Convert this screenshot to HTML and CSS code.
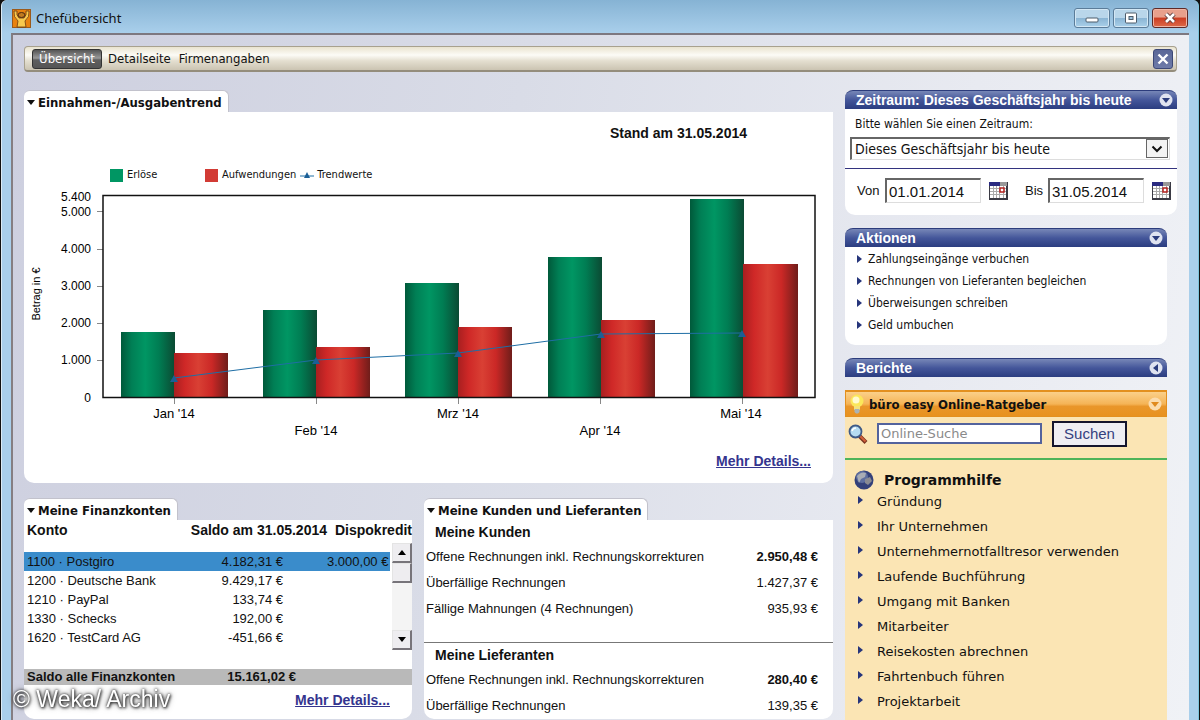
FILE: index.html
```html
<!DOCTYPE html>
<html lang="de">
<head>
    <meta charset="UTF-8">
    <meta name="viewport" content="width=device-width, initial-scale=1.0">
    <title>Chefübersicht</title>
    <link rel="stylesheet" href="styles.css">
</head>
<body>
    <div class="window">
        <header class="titlebar">
            <svg class="app-icon" width="19" height="19" viewBox="0 0 19 19">
                <rect x="0.5" y="0.5" width="18" height="18" fill="#e8820f" stroke="#9a5a1c"/>
                <path d="M2 2 L5 2 Q4 6 7 9 L12 9 Q15 6 14 2 L17 2 Q18 8 13 12 L14 18 L5 18 L6 12 Q1 8 2 2Z" fill="#f7c94e" stroke="#6b3a12" stroke-width="0.8"/>
                <ellipse cx="9.500" cy="6" rx="3.500" ry="2.500" fill="#c07a20" stroke="#4a2a12"/>
            </svg>
            <h1>Chefübersicht</h1>
            <div class="window-buttons">
                <button class="win-btn" aria-label="Minimieren">
                    <svg width="14" height="12" viewBox="0 0 14 12"><rect x="1" y="6" width="12" height="4" rx="1" fill="#fff" stroke="#4d5c6b"/></svg>
                </button>
                <button class="win-btn" aria-label="Maximieren">
                    <svg width="14" height="12" viewBox="0 0 14 12"><rect x="1.500" y="1" width="11" height="10" rx="1" fill="#fff" stroke="#4d5c6b"/><rect x="5" y="4.500" width="4" height="3" fill="#9cc4e0" stroke="#4d5c6b"/></svg>
                </button>
                <button class="win-btn win-close" aria-label="Schließen">
                    <svg width="14" height="12" viewBox="0 0 14 12"><path d="M3 2 L11 10 M11 2 L3 10" stroke="#5c3a3a" stroke-width="4.500"/><path d="M3 2 L11 10 M11 2 L3 10" stroke="#fff" stroke-width="2.600"/></svg>
                </button>
            </div>
        </header>

        <div class="client">
            <nav class="toolbar">
                <button class="tab-btn active">Übersicht</button>
                <button class="tab-btn">Detailseite</button>
                <button class="tab-btn">Firmenangaben</button>
                <button class="close-view" aria-label="Ansicht schließen">
                    <svg width="12" height="12" viewBox="0 0 12 12"><path d="M1.500 1.500 L10.500 10.500 M10.500 1.500 L1.500 10.500" stroke="#fff" stroke-width="2.400"/></svg>
                </button>
            </nav>

            <div class="columns">
                <main>
                    <section class="panel">
                        <h2 class="panel-tab">Einnahmen-/Ausgabentrend</h2>
                        <div class="panel-body trend">
                            <p class="stand">Stand am 31.05.2014</p>
                            <ul class="legend">
                                <li><span class="swatch green"></span>Erlöse</li>
                                <li><span class="swatch red"></span>Aufwendungen</li>
                                <li class="trend-key"><svg width="14" height="9" viewBox="0 0 14 9"><path d="M0 5 H14" stroke="#1f6ea5"/><path d="M7 1 L10 7 H4Z" fill="#1b5f96"/></svg>Trendwerte</li>
                            </ul>
                            <svg class="chart" viewBox="0 0 809 252" role="img" aria-label="Erlöse und Aufwendungen">
                                <defs>
                                    <linearGradient id="green">
                                        <stop offset="0" stop-color="#00593a"/>
                                        <stop offset="0.200" stop-color="#007f55"/>
                                        <stop offset="0.450" stop-color="#009663"/>
                                        <stop offset="0.700" stop-color="#007d53"/>
                                        <stop offset="1" stop-color="#0b4a33"/>
                                    </linearGradient>
                                    <linearGradient id="red">
                                        <stop offset="0" stop-color="#a81f20"/>
                                        <stop offset="0.200" stop-color="#cf2827"/>
                                        <stop offset="0.450" stop-color="#d94034"/>
                                        <stop offset="0.700" stop-color="#cb2826"/>
                                        <stop offset="1" stop-color="#6f1d1a"/>
                                    </linearGradient>
                                </defs>
                                <g stroke="#888">
                                    <path d="M73 23.500 H79 M73 61.500 H79 M73 98.500 H79 M73 135.500 H79 M73 172.500 H79"/>
                                    <path d="M150.500 210 V216 M292.500 210 V216 M434.500 210 V216 M576.500 210 V216 M718.500 210 V216"/>
                                </g>
                                <g fill="url(#green)">
                                    <rect x="97" y="144" width="54" height="66"/>
                                    <rect x="239" y="122" width="54" height="88"/>
                                    <rect x="381" y="95" width="54" height="115"/>
                                    <rect x="524" y="69" width="54" height="141"/>
                                    <rect x="666" y="11" width="54" height="199"/>
                                </g>
                                <g fill="url(#red)">
                                    <rect x="150" y="165" width="54" height="45"/>
                                    <rect x="292" y="159" width="54" height="51"/>
                                    <rect x="434" y="139" width="54" height="71"/>
                                    <rect x="577" y="132" width="54" height="78"/>
                                    <rect x="719" y="76" width="55" height="134"/>
                                </g>
                                <rect x="79" y="7.500" width="712" height="202" fill="none" stroke="#111" stroke-width="1.500"/>
                                <polyline points="150,190 292,172 434,165 577,146 718,145" fill="none" stroke="#1f6ea5"/>
                                <g fill="#1b5f96">
                                    <path d="M150 187 l4 7 h-8z"/>
                                    <path d="M292 169 l4 7 h-8z"/>
                                    <path d="M434 162 l4 7 h-8z"/>
                                    <path d="M577 143 l4 7 h-8z"/>
                                    <path d="M718 142 l4 7 h-8z"/>
                                </g>
                                <g class="y-labels">
                                    <text x="67" y="13">5.400</text>
                                    <text x="67" y="28">5.000</text>
                                    <text x="67" y="65">4.000</text>
                                    <text x="67" y="102">3.000</text>
                                    <text x="67" y="139">2.000</text>
                                    <text x="67" y="176">1.000</text>
                                    <text x="67" y="214">0</text>
                                </g>
                                <text class="axis-title" transform="translate(16 106) rotate(-90)">Betrag in €</text>
                                <g class="x-labels">
                                    <text x="150" y="230">Jan '14</text>
                                    <text x="292" y="247">Feb '14</text>
                                    <text x="434" y="230">Mrz '14</text>
                                    <text x="576" y="247">Apr '14</text>
                                    <text x="717" y="230">Mai '14</text>
                                </g>
                            </svg>
                            <a class="more" href="#">Mehr Details...</a>
                        </div>
                    </section>

                    <div class="lower">
                        <section class="panel accounts-panel">
                            <h2 class="panel-tab">Meine Finanzkonten</h2>
                            <div class="panel-body">
                                <table class="accounts">
                                    <colgroup><col class="c-name"><col class="c-saldo"><col><col class="c-scroll"></colgroup>
                                    <thead>
                                        <tr><th>Konto</th><th>Saldo am 31.05.2014</th><th colspan="2">Dispokredit</th></tr>
                                    </thead>
                                    <tbody>
                                        <tr class="selected"><td>1100 · Postgiro</td><td>4.182,31 €</td><td>3.000,00 €</td></tr>
                                        <tr><td>1200 · Deutsche Bank</td><td>9.429,17 €</td><td></td></tr>
                                        <tr><td>1210 · PayPal</td><td>133,74 €</td><td></td></tr>
                                        <tr><td>1330 · Schecks</td><td>192,00 €</td><td></td></tr>
                                        <tr><td>1620 · TestCard AG</td><td>-451,66 €</td><td></td></tr>
                                    </tbody>
                                    <tfoot>
                                        <tr><td>Saldo alle Finanzkonten</td><td>15.161,02 €</td><td colspan="2"></td></tr>
                                    </tfoot>
                                </table>
                                <div class="scrollbar">
                                    <button aria-label="Nach oben"><svg width="8" height="5" viewBox="0 0 8 5"><path d="M4 0 L8 5 H0Z"/></svg></button>
                                    <span class="thumb"></span>
                                    <button class="down" aria-label="Nach unten"><svg width="8" height="5" viewBox="0 0 8 5"><path d="M0 0 H8 L4 5Z"/></svg></button>
                                </div>
                                <a class="more" href="#">Mehr Details...</a>
                            </div>
                        </section>

                        <section class="panel partners-panel">
                            <h2 class="panel-tab">Meine Kunden und Lieferanten</h2>
                            <div class="panel-body">
                                <h3>Meine Kunden</h3>
                                <table class="partners">
                                    <tr><td>Offene Rechnungen inkl. Rechnungskorrekturen</td><td class="strong">2.950,48 €</td></tr>
                                    <tr><td>Überfällige Rechnungen</td><td>1.427,37 €</td></tr>
                                    <tr><td>Fällige Mahnungen (4 Rechnungen)</td><td>935,93 €</td></tr>
                                </table>
                                <hr>
                                <h3>Meine Lieferanten</h3>
                                <table class="partners">
                                    <tr><td>Offene Rechnungen inkl. Rechnungskorrekturen</td><td class="strong">280,40 €</td></tr>
                                    <tr><td>Überfällige Rechnungen</td><td>139,35 €</td></tr>
                                </table>
                            </div>
                        </section>
                    </div>
                </main>

                <aside>
                    <section class="card period">
                        <h2 class="card-head">Zeitraum: Dieses Geschäftsjahr bis heute
                            <svg width="14" height="14" viewBox="0 0 14 14"><circle cx="7" cy="7" r="6.500" fill="#dfe3f0"/><path d="M3 5 H11 L7 10Z" fill="#2b3c7c"/></svg>
                        </h2>
                        <div class="card-body">
                            <label class="period-label" for="zeitraum">Bitte wählen Sie einen Zeitraum:</label>
                            <div class="select-box">
                                <select id="zeitraum"><option>Dieses Geschäftsjahr bis heute</option></select>
                                <span class="select-arrow"><svg width="12" height="8" viewBox="0 0 12 8"><path d="M1.500 1.500 L6 6 L10.500 1.500" fill="none" stroke="#111" stroke-width="2"/></svg></span>
                            </div>
                            <div class="dates">
                                <label for="von">Von</label>
                                <input id="von" type="text" value="01.01.2014">
                                <button class="cal" aria-label="Kalender"><svg width="19" height="18" viewBox="0 0 19 18"><rect width="19" height="18" fill="#3a3a44"/><rect x="1" y="1" width="16" height="15" fill="#fff"/><path d="M1 6.500 H17 M1 9.500 H17 M1 12.500 H17 M4.500 4 V16 M7.500 4 V16 M10.500 4 V16 M14.500 4 V16" stroke="#aaa"/><rect width="11" height="4" fill="#2a2a80"/><rect x="11" width="7" height="4" fill="#999"/><rect x="11" y="6" width="4" height="4" fill="#fff" stroke="#b3201e" stroke-width="1.500"/></svg></button>
                                <label class="bis" for="bis">Bis</label>
                                <input id="bis" type="text" value="31.05.2014">
                                <button class="cal" aria-label="Kalender"><svg width="19" height="18" viewBox="0 0 19 18"><rect width="19" height="18" fill="#3a3a44"/><rect x="1" y="1" width="16" height="15" fill="#fff"/><path d="M1 6.500 H17 M1 9.500 H17 M1 12.500 H17 M4.500 4 V16 M7.500 4 V16 M10.500 4 V16 M14.500 4 V16" stroke="#aaa"/><rect width="11" height="4" fill="#2a2a80"/><rect x="11" width="7" height="4" fill="#999"/><rect x="11" y="6" width="4" height="4" fill="#fff" stroke="#b3201e" stroke-width="1.500"/></svg></button>
                            </div>
                        </div>
                    </section>

                    <section class="card">
                        <h2 class="card-head">Aktionen
                            <svg width="14" height="14" viewBox="0 0 14 14"><circle cx="7" cy="7" r="6.500" fill="#dfe3f0"/><path d="M3 5 H11 L7 10Z" fill="#2b3c7c"/></svg>
                        </h2>
                        <ul class="card-body actions">
                            <li><a href="#">Zahlungseingänge verbuchen</a></li>
                            <li><a href="#">Rechnungen von Lieferanten begleichen</a></li>
                            <li><a href="#">Überweisungen schreiben</a></li>
                            <li><a href="#">Geld umbuchen</a></li>
                        </ul>
                    </section>

                    <section class="card">
                        <h2 class="card-head">Berichte
                            <svg width="14" height="14" viewBox="0 0 14 14"><circle cx="7" cy="7" r="6.500" fill="#dfe3f0"/><path d="M9 3 V11 L4 7Z" fill="#2b3c7c"/></svg>
                        </h2>
                    </section>

                    <section class="card guide">
                        <h2 class="guide-head">
                            <svg width="14" height="20" viewBox="0 0 14 20"><circle cx="7" cy="7" r="6.500" fill="#fbe75a"/><circle cx="6" cy="6" r="3.500" fill="#fffbd0"/><path d="M4 12 H10 V16 H4Z" fill="#f4e27a"/><path d="M4.500 15 H9.500 V18 L8 19.500 H6 L4.500 18Z" fill="#a9b3b5"/></svg>
                            büro easy Online-Ratgeber
                            <svg class="toggle" width="14" height="14" viewBox="0 0 14 14"><circle cx="7" cy="7" r="6.500" fill="#fbdcae"/><path d="M3 5 H11 L7 10Z" fill="#e08a1e"/></svg>
                        </h2>
                        <form class="search">
                            <svg width="20" height="20" viewBox="0 0 20 20"><path d="M11.500 12 L18 18.500" stroke="#7a3420" stroke-width="4"/><path d="M12 12 L17.500 17.500" stroke="#d2603a" stroke-width="2"/><circle cx="7.500" cy="7.500" r="6" fill="#b5dcf2" stroke="#3f5a86" stroke-width="1.800"/><path d="M4 7 Q5 4 8 4" fill="none" stroke="#fff" stroke-width="1.500"/></svg>
                            <input type="text" placeholder="Online-Suche" aria-label="Online-Suche">
                            <button type="button">Suchen</button>
                        </form>
                        <div class="help">
                            <h3>
                                <svg width="20" height="20" viewBox="0 0 20 20"><circle cx="10" cy="10" r="9.500" fill="#34417a"/><circle cx="8" cy="7" r="6" fill="#5f6f9f"/><path d="M3 6 Q7 1 12 3 L11 7 L7 9 L5 13 Z" fill="#a9adb5"/><path d="M11 9 L16 7 L18 11 L14 15 L11 13Z" fill="#8a8b92"/></svg>
                                Programmhilfe
                            </h3>
                            <ul>
                                <li><a href="#">Gründung</a></li>
                                <li><a href="#">Ihr Unternehmen</a></li>
                                <li><a href="#">Unternehmernotfalltresor verwenden</a></li>
                                <li><a href="#">Laufende Buchführung</a></li>
                                <li><a href="#">Umgang mit Banken</a></li>
                                <li><a href="#">Mitarbeiter</a></li>
                                <li><a href="#">Reisekosten abrechnen</a></li>
                                <li><a href="#">Fahrtenbuch führen</a></li>
                                <li><a href="#">Projektarbeit</a></li>
                            </ul>
                        </div>
                    </section>
                </aside>
            </div>
        </div>
    </div>
    <div class="watermark">© Weka/ Archiv</div>
</body>
</html>
```

FILE: styles.css
```css
* {
    box-sizing: border-box;
}

body {
    margin: 0;
    height: 100vh;
    overflow: hidden;
    font-family: "Liberation Sans", Arial, sans-serif;
    font-size: 13px;
    color: #111;
    background: #111;
}

h1, h2, h3, p, ul {
    margin: 0;
    padding: 0;
}

ul {
    list-style: none;
}

a {
    color: inherit;
    text-decoration: none;
}

button {
    font-family: inherit;
    padding: 0;
    border: none;
    background: none;
}

svg {
    display: block;
    flex: none;
}

/* window frame */
.window {
    display: flex;
    flex-direction: column;
    height: 100vh;
    margin: 0 1px;
    padding: 0 9px;
    background: #a9cfeb;
    border-left: 1px solid #dcebf5;
    border-right: 1px solid #7cc4dc;
    border-radius: 6px 6px 0 0;
}

.titlebar {
    display: flex;
    align-items: center;
    height: 33px;
    margin: 0 -9px;
    padding: 3px 10px 0;
    background: linear-gradient(#86b3d4, #a9cfeb);
    border-radius: 6px 6px 0 0;
}

.titlebar h1 {
    margin-left: 5px;
    font: 13px/20px "Noto Sans", sans-serif;
}

.window-buttons {
    display: flex;
    gap: 3px;
    margin-left: auto;
}

.win-btn {
    display: flex;
    align-items: center;
    justify-content: center;
    width: 36px;
    height: 20px;
    border: 1px solid #5b7c99;
    border-radius: 3px;
    background: linear-gradient(#b9d6ea 50%, #8ab4d3 50%, #a9d0ea);
    box-shadow: inset 0 0 0 1px #d3e7f4;
}

.win-close {
    border-color: #5e2a28;
    background: linear-gradient(#e8a08c 45%, #cc3d22 50%, #dd6a4a);
    box-shadow: inset 0 0 0 1px #efb5a5;
}

.client {
    flex: 1;
    min-height: 0;
    padding: 11px 12px 0 11px;
    border-top: 2px solid #7d7880;
    border-left: 2px solid #857e82;
    background: linear-gradient(100deg, #cdcfdf, #d9dce7 40%, #e8eaf1 75%, #f0f2f6);
    overflow: hidden;
}

/* toolbar */
.toolbar {
    display: flex;
    align-items: center;
    height: 26px;
    padding: 0 3px 0 7px;
    border: 1px solid #a8a18e;
    border-bottom: 2px solid #948d7c;
    border-radius: 4px;
    background: linear-gradient(#e9e3cf, #fcfbf6 35%, #e4dfd0 60%, #cbc4b2);
}

.tab-btn {
    height: 20px;
    margin-right: 8px;
    font: 13px "DejaVu Sans Condensed", Tahoma, sans-serif;
    color: #111;
}

.tab-btn.active {
    width: 70px;
    margin-right: 6px;
    border: 1px solid #333;
    border-radius: 3px;
    color: #fff;
    background: linear-gradient(#555, #999 45%, #5e5e5e 55%, #555);
}

.close-view {
    display: flex;
    align-items: center;
    justify-content: center;
    width: 20px;
    height: 20px;
    margin-left: auto;
    border: 1px solid #3c4876;
    border-radius: 3px;
    background: linear-gradient(#5a6797, #6e7ba9);
}

/* layout */
.columns {
    display: flex;
    gap: 12px;
    margin-top: 18px;
}

main {
    flex: 1;
    min-width: 0;
}

aside {
    width: 332px;
}

.panel-tab {
    display: flex;
    align-items: center;
    width: max-content;
    height: 22px;
    padding: 2px 6px 0 3px;
    font: bold 13px "DejaVu Sans Condensed", Tahoma, sans-serif;
    border-right: 1px solid #c2c2cc;
    border-top: 1px solid #c2c2cc;
    border-radius: 6px 6px 0 0;
    background: #fff;
}

.panel-tab::before {
    content: "";
    margin-right: 3px;
    border: 4px solid transparent;
    border-top: 5px solid #111;
    border-bottom: 0;
}

.panel-body {
    position: relative;
    background: #fff;
    border-radius: 0 0 10px 10px;
}

.more {
    font-weight: bold;
    font-size: 14px;
    line-height: 18px;
    color: #34348e;
    text-decoration: underline;
}

/* trend chart */
.trend {
    display: flex;
    flex-direction: column;
    padding: 12px 0 13px;
}

.stand {
    align-self: flex-end;
    margin-right: 86px;
    font-size: 14px;
    font-weight: bold;
    line-height: 18px;
}

.legend {
    display: flex;
    height: 16px;
    margin: 25px 0 5px 86px;
    font: 11px/16px "DejaVu Sans Condensed", Tahoma, sans-serif;
}

.legend li {
    display: flex;
    align-items: center;
    gap: 4px;
}

.legend li:first-child {
    width: 95px;
}

.legend .trend-key {
    gap: 3px;
    margin-left: 4px;
}

.swatch {
    width: 13px;
    height: 13px;
}

.swatch.green {
    background: #009663;
}

.swatch.red {
    background: #d23b35;
}

.chart {
    width: 100%;
}

.y-labels {
    font-size: 12px;
    text-anchor: end;
}

.x-labels {
    font-size: 13px;
    text-anchor: middle;
}

.axis-title {
    font-size: 11px;
    text-anchor: middle;
}

.trend .more {
    align-self: flex-end;
    margin: 12px 22px 0 0;
}

/* accounts and partners */
.lower {
    display: flex;
    gap: 12px;
    margin-top: 15px;
}

.accounts-panel {
    flex: 388;
}

.partners-panel {
    flex: 409;
}

.lower .panel-body {
    height: 199px;
}

table {
    width: 100%;
    border-collapse: collapse;
}

.accounts {
    table-layout: fixed;
}

.c-name {
    width: 152px;
}

.c-saldo {
    width: 151px;
}

.c-scroll {
    width: 22px;
}

.accounts th {
    height: 32px;
    padding: 1px 0 0;
    font-size: 14px;
    line-height: 18px;
    text-align: right;
    vertical-align: top;
}

.accounts th:first-child {
    padding-left: 3px;
    text-align: left;
}

.accounts td {
    height: 19px;
    padding: 0 2px 0 0;
    line-height: 16px;
    text-align: right;
    white-space: nowrap;
}

.accounts td:first-child {
    padding-left: 3px;
    text-align: left;
}

.accounts tbody td:nth-child(2) {
    padding-right: 44px;
}

.accounts .selected td {
    background: #3a8ccb;
}

.accounts tbody::after {
    content: "";
    display: block;
    height: 22px;
}

.accounts tfoot td {
    height: 16px;
    font-weight: bold;
    background: #b9b9b9;
}

.accounts tfoot td:nth-child(2) {
    padding-right: 31px;
}

.accounts-panel .more {
    display: block;
    width: max-content;
    margin: 6px 22px 0 auto;
}

.scrollbar {
    position: absolute;
    top: 23px;
    right: 0;
    display: flex;
    flex-direction: column;
    width: 20px;
    height: 107px;
    background: #f4f4f4;
}

.scrollbar button,
.thumb {
    display: flex;
    align-items: center;
    justify-content: center;
    height: 20px;
    border: 1px solid #e4e4e4;
    border-right: 2px solid #77747a;
    border-bottom: 2px solid #77747a;
    background: #eeedf0;
}

.scrollbar .down {
    margin-top: auto;
}

.partners-panel .panel-body {
    padding-top: 1px;
}

.partners-panel h3 {
    padding-left: 11px;
    font-size: 14px;
    line-height: 22px;
}

.partners td {
    height: 26px;
    padding: 0 15px 0 2px;
}

.partners td:last-child {
    text-align: right;
}

.partners .strong {
    font-weight: bold;
}

hr {
    margin: 21px 0 1px;
    border: 0;
    border-top: 1px solid #777;
}

/* sidebar */
.card {
    width: 322px;
    margin-bottom: 13px;
}

.card.period {
    width: 100%;
}

.card-head {
    display: flex;
    align-items: center;
    justify-content: space-between;
    height: 19px;
    padding: 0 4px 0 11px;
    font-size: 14px;
    color: #fff;
    border-top: 1px solid #2c3c7c;
    border-radius: 8px 8px 0 0;
    background: linear-gradient(#7787b7, #44569a 50%, #2b3d80);
}

.card-body {
    background: #fff;
    border-radius: 0 0 10px 10px;
}

.period .card-body {
    padding: 6px 0 12px;
}

.period-label {
    display: block;
    padding-left: 10px;
    font: 12px/18px "DejaVu Sans Condensed", Tahoma, sans-serif;
}

.select-box {
    position: relative;
    margin: 4px 7px 8px 5px;
}

select {
    display: block;
    width: 100%;
    height: 23px;
    padding: 0 3px;
    appearance: none;
    font: 14px "DejaVu Sans Condensed", Tahoma, sans-serif;
    color: #111;
    border: 1px solid #ddd;
    border-top: 2px solid #666;
    border-left: 2px solid #666;
    border-radius: 0;
    background: #fff;
}

.select-arrow {
    position: absolute;
    top: 2px;
    right: 2px;
    display: flex;
    align-items: center;
    justify-content: center;
    width: 22px;
    height: 19px;
    border: 1px solid #666;
    background: #f3f3f3;
    pointer-events: none;
}

.dates {
    display: flex;
    align-items: center;
    padding: 9px 5px 0 12px;
    border-top: 1px solid #33337f;
}

.dates label {
    width: 28px;
}

.dates .bis {
    width: 23px;
    margin-left: 17px;
}

.dates input {
    width: 96px;
    height: 25px;
    margin-right: 8px;
    padding: 0 2px;
    font: 15px "Liberation Sans", Arial, sans-serif;
    color: #111;
    border: 1px solid #ddd;
    border-top: 2px solid #666;
    border-left: 2px solid #666;
}

.actions {
    padding: 1px 0 9px 12px;
}

.actions li,
.help li {
    display: flex;
    align-items: center;
    font: 12px/22px "DejaVu Sans Condensed", Tahoma, sans-serif;
}

.actions li {
    height: 22px;
}

.actions li::before,
.help li::before {
    content: "";
    width: 0;
    margin-right: 6px;
    border: 4px solid transparent;
    border-left: 5px solid #26357b;
    border-right: 0;
}

/* online guide */
.guide {
    margin-bottom: 0;
    min-height: 400px;
    background: #fbe5b4;
}

.guide-head {
    display: flex;
    align-items: center;
    gap: 5px;
    height: 27px;
    padding: 0 4px;
    font: bold 13px "DejaVu Sans Condensed", Verdana, sans-serif;
    border: 1px solid #e3901f;
    border-top-width: 2px;
    background: linear-gradient(#fbd08a, #f5b456 50%, #e9962a 60%, #e8921f);
}

.guide-head .toggle {
    margin-left: auto;
}

.search {
    display: flex;
    align-items: center;
    height: 43px;
    padding: 0 3px 8px;
    border-bottom: 2px solid #4fb45a;
}

.search input {
    width: 165px;
    height: 21px;
    margin: 0 10px 0 9px;
    padding: 0 2px;
    font: 13px "DejaVu Sans", Verdana, sans-serif;
    color: #111;
    border: 2px solid #53639d;
    background: #fff;
}

.search input::placeholder {
    color: #8a8a8a;
    opacity: 1;
}

.search button {
    width: 75px;
    height: 26px;
    font-size: 15px;
    color: #34407e;
    border: 2px solid #15152c;
    background: #efeef2;
}

.help {
    padding: 10px 0 0 9px;
}

.help h3 {
    display: flex;
    align-items: center;
    gap: 10px;
    height: 20px;
    font: bold 14px "DejaVu Sans", Verdana, sans-serif;
}

.help li {
    height: 25px;
    padding-left: 4px;
    font: 13px "DejaVu Sans", Verdana, sans-serif;
}

.help ul {
    margin-top: -1px;
}

.help li::before {
    margin: 0 14px 4px 0;
}

.watermark {
    position: fixed;
    left: 13px;
    bottom: 8px;
    font-size: 23px;
    line-height: 26px;
    color: #fff;
    text-shadow: 0 0 3px #222, 1px 1px 3px #333, 0 0 6px #666;
}
```
